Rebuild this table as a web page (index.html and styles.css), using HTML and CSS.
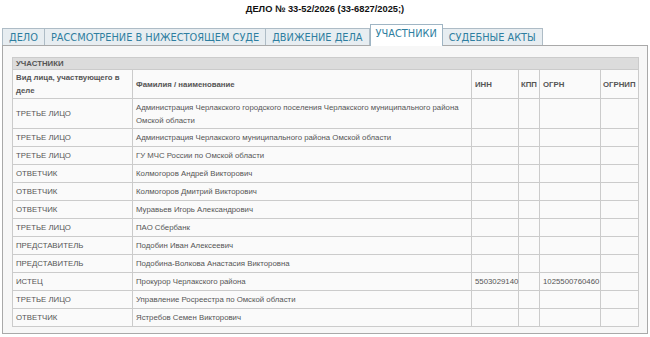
FILE: index.html
```html
<!DOCTYPE html>
<html lang="ru">
<head>
<meta charset="utf-8">
<link rel="stylesheet" href="styles.css">
</head>
<body>
<h1 class="title">ДЕЛО № 33-52/2026 (33-6827/2025;)</h1>
<div class="tabs">
  <a class="tab">ДЕЛО</a>
  <a class="tab">РАССМОТРЕНИЕ В НИЖЕСТОЯЩЕМ СУДЕ</a>
  <a class="tab">ДВИЖЕНИЕ ДЕЛА</a>
  <a class="tab active">УЧАСТНИКИ</a>
  <a class="tab">СУДЕБНЫЕ АКТЫ</a>
</div>
<div class="panel">
  <table class="parts">
    <colgroup>
      <col class="c-kind"><col class="c-name"><col class="c-inn"><col class="c-kpp"><col class="c-ogrn"><col class="c-ogrnip">
    </colgroup>
    <thead>
      <tr class="cap"><th colspan="6">УЧАСТНИКИ</th></tr>
      <tr class="head"><th>Вид лица, участвующего в деле</th><th>Фамилия / наименование</th><th>ИНН</th><th class="narrow">КПП</th><th>ОГРН</th><th class="narrow">ОГРНИП</th></tr>
    </thead>
    <tbody>
      <tr class="tall"><td>ТРЕТЬЕ ЛИЦО</td><td>Администрация Черлакского городского поселения Черлакского муниципального района Омской области</td><td></td><td></td><td></td><td></td></tr>
      <tr><td>ТРЕТЬЕ ЛИЦО</td><td>Администрация Черлакского муниципального района Омской области</td><td></td><td></td><td></td><td></td></tr>
      <tr><td>ТРЕТЬЕ ЛИЦО</td><td>ГУ МЧС России по Омской области</td><td></td><td></td><td></td><td></td></tr>
      <tr><td>ОТВЕТЧИК</td><td>Колмогоров Андрей Викторович</td><td></td><td></td><td></td><td></td></tr>
      <tr><td>ОТВЕТЧИК</td><td>Колмогоров Дмитрий Викторович</td><td></td><td></td><td></td><td></td></tr>
      <tr><td>ОТВЕТЧИК</td><td>Муравьев Игорь Александрович</td><td></td><td></td><td></td><td></td></tr>
      <tr><td>ТРЕТЬЕ ЛИЦО</td><td>ПАО Сбербанк</td><td></td><td></td><td></td><td></td></tr>
      <tr><td>ПРЕДСТАВИТЕЛЬ</td><td>Подобин Иван Алексеевич</td><td></td><td></td><td></td><td></td></tr>
      <tr><td>ПРЕДСТАВИТЕЛЬ</td><td>Подобина-Волкова Анастасия Викторовна</td><td></td><td></td><td></td><td></td></tr>
      <tr><td>ИСТЕЦ</td><td>Прокурор Черлакского района</td><td>5503029140</td><td></td><td>1025500760460</td><td></td></tr>
      <tr><td>ТРЕТЬЕ ЛИЦО</td><td>Управление Росреестра по Омской области</td><td></td><td></td><td></td><td></td></tr>
      <tr><td>ОТВЕТЧИК</td><td>Ястребов Семен Викторович</td><td></td><td></td><td></td><td></td></tr>
    </tbody>
  </table>
</div>
</body>
</html>
```
FILE: styles.css
```css
html, body {
  margin: 0;
  padding: 0;
  background: #fff;
}
body {
  font-family: "Liberation Sans", Arial, sans-serif;
  color: #333;
}
.title {
  margin: 0;
  height: 23px;
  padding-top: 4px;
  box-sizing: border-box;
  text-align: center;
  font-size: 9.3px;
  font-weight: bold;
  color: #111;
  line-height: 11px;
}
.tabs {
  display: flex;
  align-items: flex-end;
  padding-left: 2px;
  height: 22px;
  position: relative;
  z-index: 1;
}
.tab {
  display: block;
  box-sizing: border-box;
  height: 17px;
  padding: 0 6px;
  border: 1px solid #aebcc6;
  border-bottom: none;
  background: #e7edf1;
  font-family: "DejaVu Sans", Verdana, sans-serif;
  font-size: 9.8px;
  line-height: 18px;
  color: #2e7ea0;
  white-space: nowrap;
}
.tab + .tab {
  border-left: none;
}
.tab.active {
  height: 22px;
  margin-bottom: -1px;
  padding: 0 5px 5px;
  background: #fff;
  border: 1px solid #9fb5c4;
  border-bottom: none;
  line-height: 17px;
}
.tab.active + .tab {
  border-left: none;
}
.panel {
  margin: 0 2px;
  border: 1px solid #a9a9a9;
  background: #f7f7f7;
  padding: 11px 10px 6px 9px;
  height: 289px;
  box-sizing: border-box;
}
.parts {
  border-collapse: collapse;
  table-layout: fixed;
  width: 626px;
  font-size: 7.8px;
  color: #555;
  background: #fafafa;
}
.c-kind { width: 120px; }
.c-name { width: 339px; }
.c-inn { width: 47px; }
.c-kpp { width: 21px; }
.c-ogrn { width: 61px; }
.c-ogrnip { width: 38px; }
.parts th, .parts td {
  border: 1px solid #cbcbcb;
  padding: 0 3px;
  text-align: left;
  vertical-align: middle;
  line-height: 13px;
  height: 17px;
}
.parts th.narrow {
  padding: 0 1px 0 2px;
  white-space: nowrap;
}
.parts .cap th {
  background: #dcdcdc;
  height: 11px;
  line-height: 11px;
  font-weight: bold;
}
.parts .head th {
  height: 28px;
  font-weight: bold;
}
.parts .tall td {
  height: 29px;
}
```
